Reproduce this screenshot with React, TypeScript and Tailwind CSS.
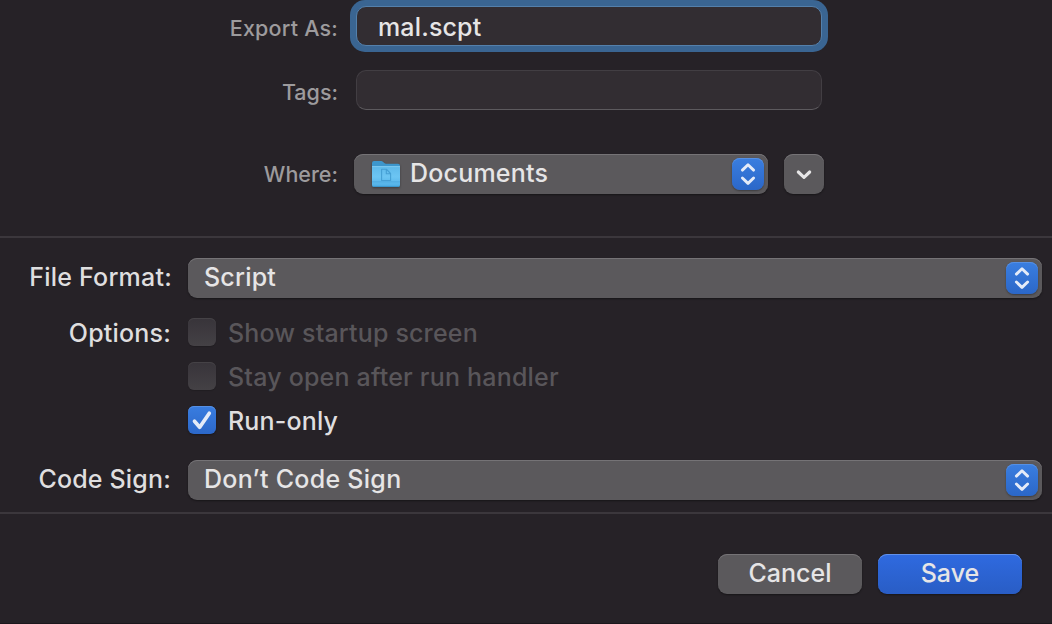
import type { ReactNode } from 'react';

const button =
  'bg-[#5b595c] shadow-[inset_0_1px_0_#757376,0_1px_2px_rgba(0,0,0,0.4)] rounded-[9px]';

function Stepper() {
  return (
    <span className="flex h-8 w-8 shrink-0 rounded-lg bg-linear-to-b from-[#3a7ee0] to-[#2b67c8] shadow-[inset_0_1px_0_#5690e4,0_1px_2px_rgba(0,0,0,0.35)]">
      <svg width="32" height="32" viewBox="0 0 32 32" fill="none" stroke="#e4ebf8" strokeWidth="2.9" strokeLinecap="round" strokeLinejoin="round">
        <path d="M10.4 12.1 16 6.8l5.6 5.3M10.4 20 16 25.4l5.6-5.4" />
      </svg>
    </span>
  );
}

function FolderIcon() {
  return (
    <svg width="32" height="32" viewBox="0 0 32 32" className="shrink-0 drop-shadow-[0_1px_1px_rgba(0,0,0,0.35)]">
      <defs>
        <linearGradient id="folder" x1="0" y1="0" x2="0" y2="1">
          <stop offset="0" stopColor="#5fb9ea" />
          <stop offset=".5" stopColor="#6cc5f3" />
          <stop offset="1" stopColor="#4fafe6" />
        </linearGradient>
      </defs>
      <path d="M2 5q0-2 2-2h7.2q1 0 1.7.7l1.4 1.4q.8.7 1.8.7H28q2 0 2 2V12H2z" fill="#3d96cc" />
      <path d="M2 8.5h28V27q0 2-2 2H4q-2 0-2-2z" fill="url(#folder)" />
      <path d="M2 8.6h28" stroke="#8bd2f5" strokeWidth=".8" />
      <path d="M2 23.8h28" stroke="#4aa6dc" strokeWidth=".8" />
      <path d="M2.8 28.4h26.4" stroke="#3b94ca" strokeWidth="1" />
      <path d="M11.6 11.3h5l4 4.2v7h-9zM16.3 11.3v4.4h4.3" fill="none" stroke="#459fd4" strokeWidth="1.1" strokeLinejoin="round" />
    </svg>
  );
}

function Label({ small, width, className, children }: { small?: boolean; width: string; className: string; children: ReactNode }) {
  return (
    <div className={`${width} shrink-0 text-right ${small ? 'text-[21.5px] text-[#9d9b9d]' : 'text-[25px] text-[#dfdedf]'} ${className}`}>
      {children}
    </div>
  );
}

function Popup({ className, children }: { className: string; children: ReactNode }) {
  return (
    <div className={`flex h-10 items-center justify-between pr-1 pl-4 ${button} ${className}`}>
      {children}
      <Stepper />
    </div>
  );
}

function Option({ checked, className, children }: { checked?: boolean; className: string; children: ReactNode }) {
  return (
    <div className="flex h-7 items-center gap-3">
      {checked ? (
        <span className="h-7 w-7 rounded-md bg-linear-to-b from-[#397de0] to-[#2c68c9] shadow-[inset_0_1px_0_#5690e4,0_1px_2px_rgba(0,0,0,0.35)]">
          <svg width="28" height="28" viewBox="0 0 28 28" fill="none" stroke="#e4ebf8" strokeWidth="3.7" strokeLinecap="round" strokeLinejoin="round">
            <path d="m6.5 15.2 5.2 6L21.3 7.2" />
          </svg>
        </span>
      ) : (
        <span className="h-7 w-7 rounded-md bg-linear-to-b from-[#38343a] to-[#444145] shadow-[inset_0_1px_0_#454246,0_1px_1px_rgba(0,0,0,0.15)]" />
      )}
      <span className={`${checked ? 'text-[#dfdedf]' : 'text-[#59565a]'} ${className}`}>{children}</span>
    </div>
  );
}

export default function App() {
  return (
    <div className="h-[624px] w-[1052px] overflow-hidden border-b border-[#1b171c] bg-[#262227] font-['Inter','Liberation_Sans',sans-serif] text-[25px] leading-7 font-[450] whitespace-nowrap text-[#e6e5e6]">
      <section className="h-[236px]">
        <div className="flex h-[52px] items-center">
          <Label small width="w-[338px]" className="tracking-[0.2px] pt-1">Export As:</Label>
          <div className="ml-3 flex h-[52px] w-[478px] rounded-[15px] bg-[#3a6592] p-1.5">
            <div className="flex h-10 flex-1 items-center rounded-[10px] border border-[#5480ab] bg-[#322d32] pl-[21px]">
              <span className="pt-0.5 tracking-[0.15px]">mal.scpt</span>
            </div>
          </div>
        </div>
        <div className="mt-[18px] flex h-10 items-center">
          <Label small width="w-[338px]" className="pt-1">Tags:</Label>
          <div className="ml-[18px] h-10 w-[466px] rounded-[10px] border border-[#423e43] border-b-[#5d5a5e] bg-[#322d32]" />
        </div>
        <div className="mt-11 flex h-10 items-center">
          <Label small width="w-[338px]" className="">Where:</Label>
          <Popup className="ml-4 w-[414px]">
            <span className="flex items-center gap-2">
              <FolderIcon />
              <span className="pb-0.5 tracking-[0.2px]">Documents</span>
            </span>
          </Popup>
          <div className={`ml-4 flex h-10 w-10 items-center justify-center ${button}`}>
            <svg width="20" height="20" viewBox="0 0 20 20" fill="none" stroke="#e6e5e6" strokeWidth="3.1" strokeLinecap="round" strokeLinejoin="round">
              <path d="m4.3 8 5.7 5.4L15.7 8" />
            </svg>
          </div>
        </div>
      </section>
      <section className="h-[278px] border-y-2 border-[#3b373c] pt-5">
        <div className="flex h-10 items-center">
          <Label width="w-[172px]" className="pb-0.5 tracking-[0.22px]">File Format:</Label>
          <Popup className="ml-4 w-[854px]"><span className="pb-0.5 tracking-[0.2px]">Script</span></Popup>
        </div>
        <div className="mt-5 flex items-start">
          <Label width="w-[171px]" className="pt-px tracking-[0.2px]">Options:</Label>
          <div className="ml-[17px] flex flex-col gap-4">
            <Option className="pt-0.5 tracking-[0.16px]">Show startup screen</Option>
            <Option className="pt-0.5 tracking-[0.2px]">Stay open after run handler</Option>
            <Option checked className="pt-0.5 tracking-[0.15px]">Run-only</Option>
          </div>
        </div>
        <div className="mt-[26px] flex h-10 items-center">
          <Label width="w-[171px]" className="pb-0.5 tracking-[0.18px]">Code Sign:</Label>
          <Popup className="ml-[17px] w-[854px]"><span className="pb-0.5 tracking-[0.28px]">Don’t Code Sign</span></Popup>
        </div>
      </section>
      <footer className="mt-10 flex justify-end gap-4 pr-[30px]">
        <button className={`h-10 w-36 pb-0.5 ${button}`}>Cancel</button>
        <button className="h-10 w-36 rounded-[9px] bg-linear-to-b from-[#2f6ae0] to-[#295dc5] pb-0.5 shadow-[inset_0_1px_0_#6291ea,0_1px_2px_rgba(0,0,0,0.4)]">Save</button>
      </footer>
    </div>
  );
}
